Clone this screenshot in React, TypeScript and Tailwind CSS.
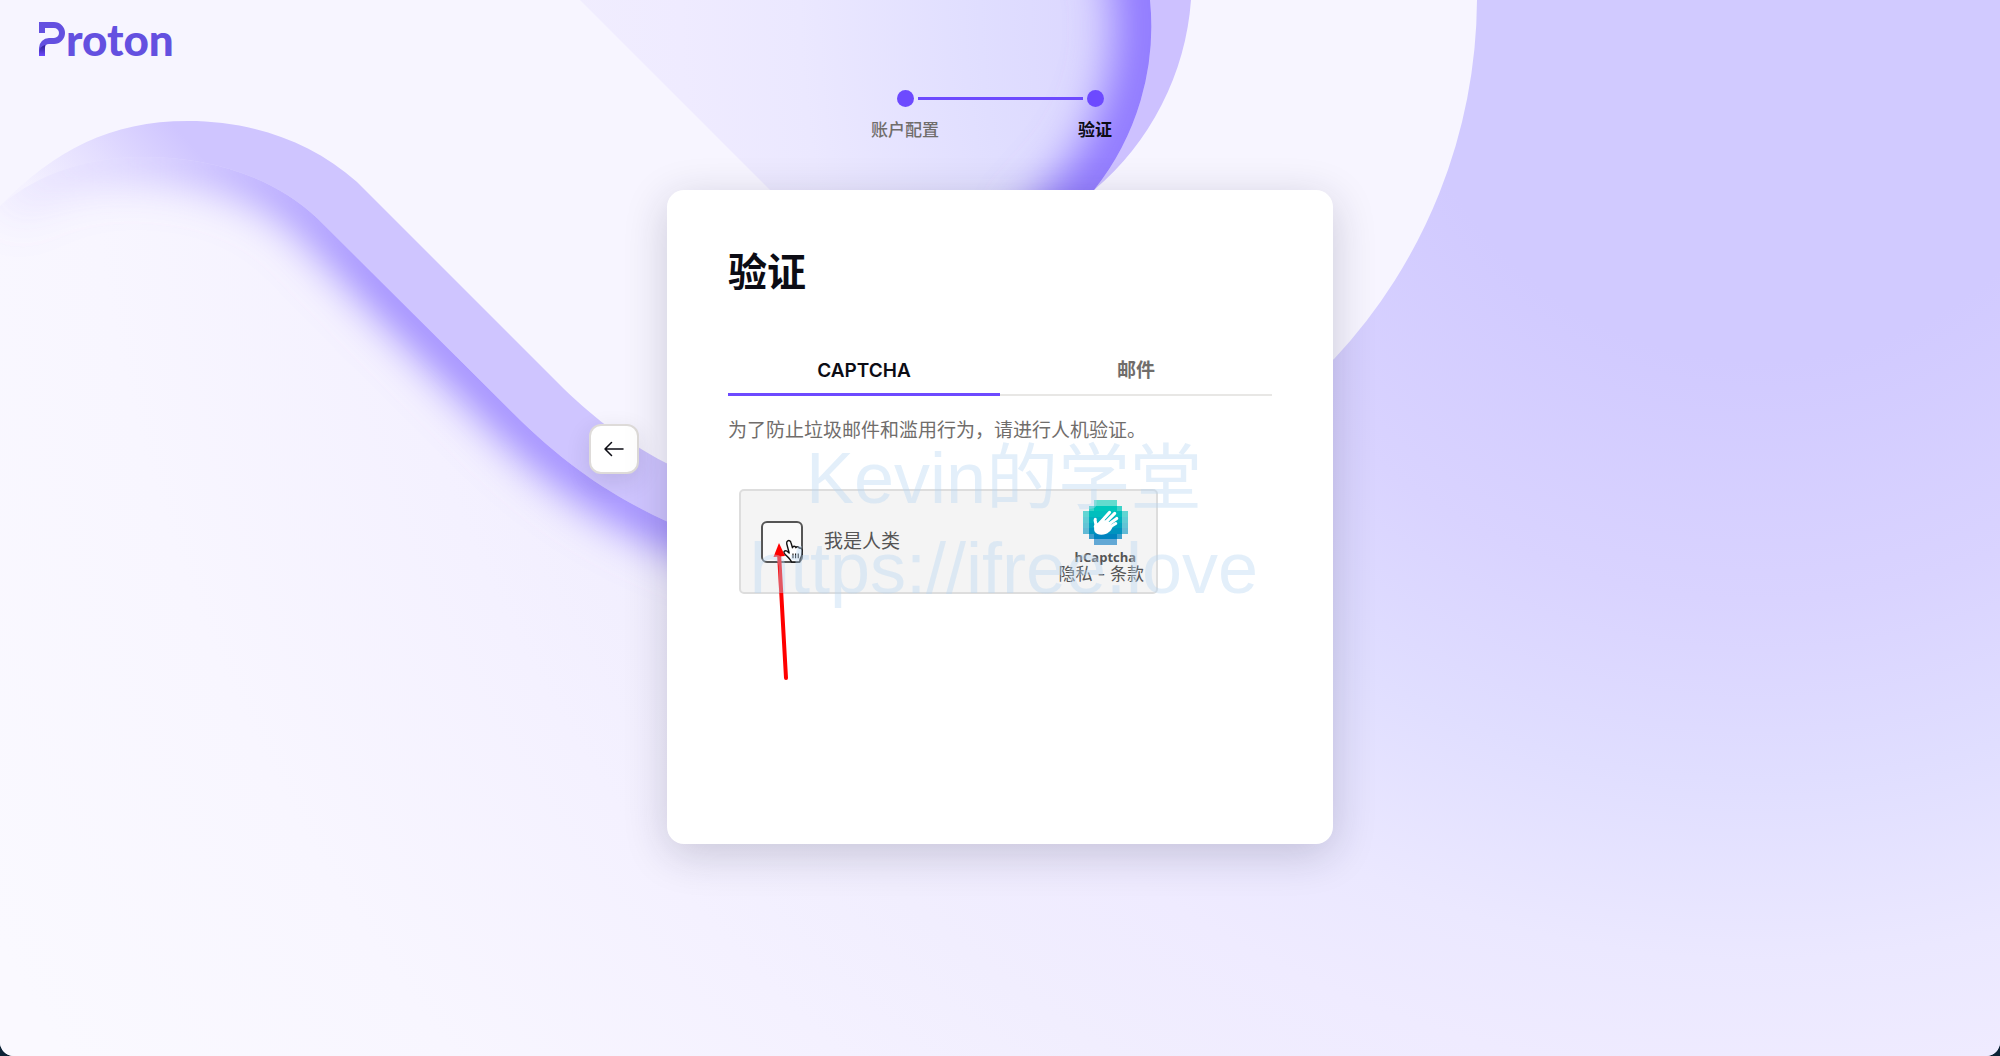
import React, { useState } from 'react';

type Tab = {
  id: string;
  label: string;
};

const tabs: Tab[] = [
  { id: 'captcha', label: 'CAPTCHA' },
  { id: 'email', label: '邮件' },
];

const steps = ['账户配置', '验证'];

// Row colours of the hCaptcha badge, top to bottom
const badgeRows = [
  '#00cbb4',
  '#00c8bb',
  '#00bfbd',
  '#00b1bf',
  '#00a3bf',
  '#0093bf',
  '#0083bf',
  '#0074bf',
];

// First filled column of each badge row (rows are symmetric)
const badgeInsets = [2, 1, 0, 0, 0, 0, 1, 2];

const wave =
  'M0 206 C40 172 90 157 143 157 C210 157 272 176 317 218 L513 413 C565 465 612 496 666 521 L760 560';

const Background: React.FC = () => (
  <svg
    className="absolute inset-0 h-full w-full"
    viewBox="0 0 2000 1056"
    preserveAspectRatio="xMidYMin slice"
    aria-hidden="true"
  >
    <defs>
      <radialGradient id="base" gradientUnits="userSpaceOnUse" cx="1760" cy="0" r="2000">
        <stop offset="0.18" stopColor="#d1caff" />
        <stop offset="0.3" stopColor="#d9d3ff" />
        <stop offset="0.39" stopColor="#e0deff" />
        <stop offset="0.48" stopColor="#ebe8ff" />
        <stop offset="0.54" stopColor="#efebff" />
        <stop offset="0.62" stopColor="#f1eefe" />
        <stop offset="0.7" stopColor="#f4f1ff" />
        <stop offset="0.84" stopColor="#f8f6ff" />
        <stop offset="1" stopColor="#faf9ff" />
      </radialGradient>
      <linearGradient id="ribbon" gradientUnits="userSpaceOnUse" x1="50" y1="210" x2="160" y2="110">
        <stop offset="0" stopColor="#cfc5ff" stopOpacity="0.1" />
        <stop offset="0.5" stopColor="#cfc5ff" stopOpacity="0.5" />
        <stop offset="1" stopColor="#cfc5ff" />
      </linearGradient>
      <linearGradient id="waveShade" gradientUnits="userSpaceOnUse" x1="-20" y1="0" x2="380" y2="0">
        <stop offset="0" stopColor="#9580ff" stopOpacity="0.05" />
        <stop offset="0.4" stopColor="#9580ff" stopOpacity="0.35" />
        <stop offset="1" stopColor="#9580ff" />
      </linearGradient>
      <filter id="soft" filterUnits="userSpaceOnUse" x="-100" y="-200" width="1500" height="1000">
        <feGaussianBlur stdDeviation="22" />
      </filter>
      <clipPath id="belowWave">
        <path d={`${wave} V1056 H0 Z`} />
      </clipPath>
      <clipPath id="innerDisc">
        <path d="M580 0 L840 260 H1047 L1094 190 A262 262 0 0 0 1150 0 Z" />
      </clipPath>
    </defs>

    <rect width="2000" height="1056" fill="url(#base)" />

    {/* pale sheet over the top */}
    <path
      d="M0 0 H1477 A530 530 0 0 1 1334 359 L1100 520 L760 500 L666 463 C622 440 590 415 558 383 L357 182 C310 140 250 121 188 121 C110 121 55 150 0 206 Z"
      fill="#f7f5ff"
    />

    {/* ribbon on the left */}
    <path
      d={`${wave} V500 L666 463 C622 440 590 415 558 383 L357 182 C310 140 250 121 188 121 C110 121 55 150 0 206 Z`}
      fill="url(#ribbon)"
    />
    <g clipPath="url(#belowWave)">
      <path d={wave} fill="none" stroke="url(#waveShade)" strokeWidth="48" filter="url(#soft)" />
    </g>

    {/* disc at the top */}
    <path d="M1100 0 H1191 A275 275 0 0 1 1094 190 L1060 240 Z" fill="#cdc1ff" />
    <path d="M580 0 L840 260 H1047 L1094 190 A262 262 0 0 0 1150 0 Z" fill="url(#base)" />
    <g clipPath="url(#innerDisc)">
      <path
        d="M1128 -80 A262 262 0 0 1 1151 27 A262 262 0 0 1 1094 190 L1040 250"
        fill="none"
        stroke="#8f78ff"
        strokeWidth="72"
        filter="url(#soft)"
      />
    </g>
  </svg>
);

const Logo: React.FC = () => (
  <a href="#" aria-label="Proton" className="flex h-[34px] items-end text-[#6450e0]">
    <svg width="27" height="34" viewBox="0 0 27 34" aria-hidden="true">
      <defs>
        <linearGradient id="fold" x1="0" y1="0" x2="0" y2="1">
          <stop offset="0" stopColor="#2f2091" />
          <stop offset="1" stopColor="#6d4aff" />
        </linearGradient>
      </defs>
      <path
        d="M3 11 V3 H15 A8 8 0 0 1 15 19 H10 A7 7 0 0 0 3 26 V34"
        fill="none"
        stroke="currentColor"
        strokeWidth="6"
      />
      <path d="M0 34 V29 A9 9 0 0 1 6 23 V34 Z" fill="url(#fold)" />
    </svg>
    <span className="font-[Lato,sans-serif] text-[44px] leading-[34px] font-black">roton</span>
  </a>
);

const HCaptchaBadge: React.FC = () => (
  <svg width="45" height="45" viewBox="0 0 44 44" aria-hidden="true">
    {badgeRows.map((color, row) =>
      Array.from({ length: 8 - badgeInsets[row] * 2 }, (_, i) => {
        const col = badgeInsets[row] + i;
        const edge = row === 0 || row === 7 || col === 0 || col === 7;
        const nearCorner = (row === 1 || row === 6) && (col === 1 || col === 6);
        return (
          <rect
            key={`${row}-${col}`}
            x={col * 5.5}
            y={row * 5.5}
            width="5.5"
            height="5.5"
            shapeRendering="crispEdges"
            fill={color}
            opacity={edge ? 0.6 : nearCorner ? 0.75 : 1}
          />
        );
      })
    )}
    <g stroke="#fff" strokeWidth="3" strokeLinecap="round" fill="none">
      <path d="M17 22 L26 12" />
      <path d="M20 24 L31 13" />
      <path d="M22 26 L33 18" />
      <path d="M22 29 L32 23" />
      <path d="M12 26 C14 23 11 21 12 19" />
    </g>
    <path d="M12 24 C9 30 12 34 18 34 C24 34 28 30 29 26 L25 21 L19 19 Z" fill="#fff" />
  </svg>
);

const HandCursor: React.FC = () => (
  <svg
    className="pointer-events-none absolute top-[18px] left-5"
    width="23"
    height="25"
    viewBox="0 0 24 26"
    aria-hidden="true"
  >
    <path
      d="M7 2 C8.500 1 10 2 10.300 3.500 L12 9 C12.500 7 15 7 15.500 9 C16.500 7.500 18.500 8 19 9.500 C20.500 9 22 10 22 12 C22.300 16 22 18 20 21 L19.500 24 H11 C10 21 6 18 3.500 15 C2 13 4.500 11.500 6 12.500 L8.500 14.500 L6 5 C5.700 3.500 6 2.500 7 2 Z"
      fill="#fff"
      stroke="#111"
      strokeWidth="1.500"
      strokeLinejoin="round"
    />
    <path d="M12.500 15 V20 M15.200 15 V20 M18 15 V20" stroke="#111" strokeWidth="1.200" />
  </svg>
);

const App: React.FC = () => {
  const [activeTab, setActiveTab] = useState('captcha');
  const [checked, setChecked] = useState(false);

  return (
    <div className="bg-[#0c2336] font-[Inter,'Noto_Sans_CJK_SC',sans-serif] text-[#0c0c14]">
      <div className="relative min-h-screen overflow-hidden rounded-b-[14px] bg-[#f7f5ff]">
        <Background />

        <div className="relative">
          <header className="flex px-[39px] pt-[22px]">
            <Logo />
          </header>

          <nav aria-label="Steps" className="mt-[34px]">
            <div className="flex items-center justify-center gap-1">
              <span className="size-[17px] rounded-full bg-[#6d4aff]" />
              <span className="h-[3px] w-[165px] bg-[#6d4aff]" />
              <span className="size-[17px] rounded-full bg-[#6d4aff]" />
            </div>
            <ol className="mx-auto mt-[13px] grid w-[380px] grid-cols-2 text-center text-[17px] leading-5">
              {steps.map((step, index) => (
                <li
                  key={step}
                  className={index === 1 ? 'font-bold' : 'font-medium text-[#706d6b]'}
                >
                  {step}
                </li>
              ))}
            </ol>
          </nav>

          <div className="mt-[50px] grid grid-cols-[1fr_minmax(0,666px)_1fr] pb-16">
            <button
              type="button"
              aria-label="返回"
              className="mt-[234px] mr-7 flex size-[50px] items-center justify-center justify-self-end rounded-xl border-2 border-[#dedbd9] bg-white shadow-[0_8px_24px_rgba(31,31,49,0.12)]"
            >
              <svg width="20" height="16" viewBox="0 0 20 16" fill="none" aria-hidden="true">
                <path
                  d="M19 8 H1 M7.500 1.500 L1 8 L7.500 14.500"
                  stroke="#0c0c14"
                  strokeWidth="1.500"
                  strokeLinecap="round"
                  strokeLinejoin="round"
                />
              </svg>
            </button>

            <main className="relative min-h-[654px] rounded-[17px] bg-white px-[61px] pt-[58px] shadow-[0_10px_44px_rgba(31,31,60,0.2)]">
              <h1 className="text-[39px] leading-[48px] font-bold">验证</h1>

              <div role="tablist" className="mt-12 grid grid-cols-2 border-b-2 border-[#e8e7e5]">
                {tabs.map((tab) => (
                  <button
                    key={tab.id}
                    type="button"
                    role="tab"
                    aria-selected={activeTab === tab.id}
                    onClick={() => setActiveTab(tab.id)}
                    className={`-mb-[2px] h-[52px] border-b-[3px] pt-[5px] text-[19px] font-semibold ${
                      activeTab === tab.id
                        ? 'border-[#6d4aff]'
                        : 'border-transparent text-[#706d6b]'
                    }`}
                  >
                    {tab.label}
                  </button>
                ))}
              </div>

              <p className="mt-[21px] text-[19px] leading-7 text-[#706d6b]">
                为了防止垃圾邮件和滥用行为，请进行人机验证。
              </p>

              <div className="mt-11 ml-[11px] flex h-[105px] max-w-[419px] items-center rounded-[5px] border-2 border-[#dddddd] bg-[#f4f4f4] pr-3 pl-5">
                <div className="relative size-[42px]">
                  <input
                    id="human"
                    type="checkbox"
                    checked={checked}
                    onChange={() => setChecked(!checked)}
                    className="block size-[42px] appearance-none rounded-md border-2 border-[#555555] bg-[#fafafa] checked:bg-[#00b1bf]"
                  />
                  <HandCursor />
                  {/* hand-drawn pointer to the tick box */}
                  <svg
                    className="pointer-events-none absolute top-[22px] left-[11px]"
                    width="18"
                    height="138"
                    viewBox="0 0 18 138"
                    aria-hidden="true"
                  >
                    <path d="M7 10 L14 135" stroke="#ff0000" strokeWidth="4" strokeLinecap="round" />
                    <path d="M7 0 L13 13 L1.500 14 Z" fill="#ff0000" />
                  </svg>
                </div>
                <label htmlFor="human" className="ml-[21px] pt-[2px] text-[19px] text-[#555555]">
                  我是人类
                </label>
                <div className="ml-auto flex flex-col items-center text-[#555555]">
                  <div className="flex flex-col items-center pl-2">
                    <HCaptchaBadge />
                    <span className="mt-1 font-['Open_Sans',sans-serif] text-[13px] leading-4 font-bold">
                      hCaptcha
                    </span>
                  </div>
                  <span className="text-[17px] leading-[18px]">
                    <a href="#">隐私</a> - <a href="#">条款</a>
                  </span>
                </div>
              </div>

              <div className="pointer-events-none absolute inset-x-0 top-[243px] pl-2 text-center font-['Liberation_Sans','Noto_Sans_CJK_SC',sans-serif] text-[72px] leading-[90px] whitespace-nowrap text-[#b8d8f2]/40">
                <p>Kevin的学堂</p>
                <p>https://ifree.love</p>
              </div>
            </main>
          </div>
        </div>
      </div>
    </div>
  );
};

export default App;
